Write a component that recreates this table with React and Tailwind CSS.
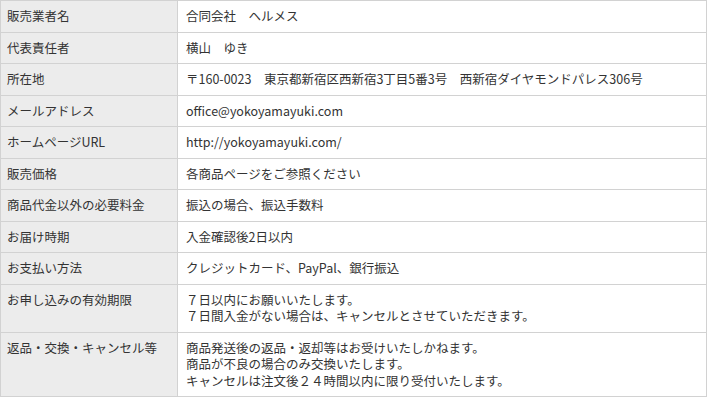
import React from 'react';

// 特定商取引法に基づく表記
const rows = [
    { label: '販売業者名', value: ['合同会社　ヘルメス'] },
    { label: '代表責任者', value: ['横山　ゆき'] },
    { label: '所在地', value: ['〒160-0023　東京都新宿区西新宿3丁目5番3号　西新宿ダイヤモンドパレス306号'] },
    { label: 'メールアドレス', value: ['office@yokoyamayuki.com'] },
    { label: 'ホームページURL', value: ['http://yokoyamayuki.com/'] },
    { label: '販売価格', value: ['各商品ページをご参照ください'] },
    { label: '商品代金以外の必要料金', value: ['振込の場合、振込手数料'] },
    { label: 'お届け時期', value: ['入金確認後2日以内'] },
    { label: 'お支払い方法', value: ['クレジットカード、PayPal、銀行振込'] },
    {
        label: 'お申し込みの有効期限',
        value: ['７日以内にお願いいたします。', '７日間入金がない場合は、キャンセルとさせていただきます。']
    },
    {
        label: '返品・交換・キャンセル等',
        value: [
            '商品発送後の返品・返却等はお受けいたしかねます。',
            '商品が不良の場合のみ交換いたします。',
            'キャンセルは注文後２４時間以内に限り受付いたします。'
        ]
    }
];

const App = () => {
    return (
        <div className="w-[708px] h-[398px] bg-white font-['Noto_Sans_CJK_JP','Noto_Sans',sans-serif] text-[12.5px] leading-[16.5px] text-[#333]">
            <table className="w-[707px] border-collapse border border-[#d2d2d2]">
                <tbody>
                    {rows.map(row => (
                        <tr key={row.label}>
                            <th className="w-[177px] align-top text-left font-normal bg-[#ececec] border border-[#d2d2d2] pl-[6px] pr-2 pt-[7px] pb-[7px]">
                                {row.label}
                            </th>
                            <td className="align-top border border-[#d2d2d2] pl-[8px] pr-2 pt-[7px] pb-[7px]">
                                {row.value.map(line => (
                                    <div key={line}>{line}</div>
                                ))}
                            </td>
                        </tr>
                    ))}
                </tbody>
            </table>
        </div>
    );
};

export default App;
